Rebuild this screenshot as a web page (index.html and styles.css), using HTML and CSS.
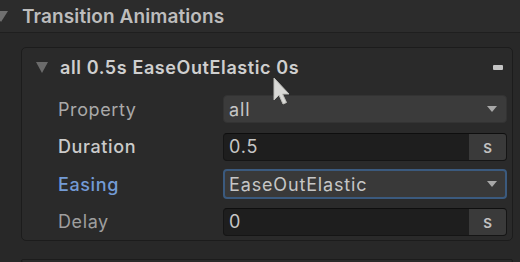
FILE: index.html
```html
<!DOCTYPE html>
<html lang="en">
<head>
    <meta charset="UTF-8">
    <meta name="viewport" content="width=device-width, initial-scale=1.0">
    <title>Transition Animations</title>
    <link rel="stylesheet" href="styles.css">
</head>
<body>
    <div class="section-header">
        <span class="foldout open"></span>
        <span class="section-title">Transition Animations</span>
    </div>

    <div class="section-body">
        <div class="card">
            <div class="card-header">
                <span class="foldout small open"></span>
                <span class="card-title">all 0.5s EaseOutElastic 0s</span>
                <span class="remove-btn"></span>
            </div>

            <div class="fields">
                <div class="field">
                    <div class="label">Property</div>
                    <div class="dropdown">
                        <span class="value">all</span>
                        <span class="arrow"></span>
                    </div>
                </div>
                <div class="field">
                    <div class="label modified">Duration</div>
                    <div class="text-input">
                        <span class="value">0.5</span>
                        <span class="unit">s</span>
                    </div>
                </div>
                <div class="field">
                    <div class="label focused">Easing</div>
                    <div class="dropdown focused">
                        <span class="value">EaseOutElastic</span>
                        <span class="arrow"></span>
                    </div>
                </div>
                <div class="field">
                    <div class="label dim">Delay</div>
                    <div class="text-input">
                        <span class="value">0</span>
                        <span class="unit">s</span>
                    </div>
                </div>
            </div>
        </div>

        <div class="card next"></div>
    </div>

    <!-- mouse pointer sitting over the card header -->
    <svg class="cursor" width="20" height="30" viewBox="0 0 20 30">
        <path d="M1 1 L1 23 L6 18 L10 27 L13.5 25.5 L9.5 17 L16 17 Z" fill="#d9d9d6" stroke="#bdbdb9" stroke-width="1" stroke-linejoin="round"/>
    </svg>
</body>
</html>
```

FILE: styles.css
```css
body {
    margin: 0;
    width: 520px;
    height: 262px;
    overflow: hidden;
    background: #282828;
    font-family: Inter, "Open Sans", sans-serif;
    color: #c4c4c4;
    position: relative;
}

.section-header {
    height: 32px;
    display: flex;
    align-items: center;
    background: #2c2c2c;
    border-bottom: 1px solid #1f1f1f;
}
.section-title {
    margin-left: 14px;
    font-size: 19px;
    font-weight: 600;
    color: #bdbdbd;
    letter-spacing: 0.1px;
}

.foldout {
    width: 0;
    height: 0;
    border-left: 7px solid transparent;
    border-right: 7px solid transparent;
    border-top: 11px solid #707070;
    margin-left: -6px;
}
.foldout.small {
    border-left-width: 6px;
    border-right-width: 6px;
    border-top-width: 11px;
    border-top-color: #6b6b6b;
    margin-left: 0;
}

.section-body {
    padding: 14px 7px 0 21px;
}

.card {
    background: #2a2a2a;
    border: 1px solid #1c1c1c;
    border-radius: 5px;
    padding: 0 5px 4px 0;
}
.card.next {
    margin-top: 18px;
    height: 2px;
    padding: 0;
}

.card-header {
    height: 38px;
    display: flex;
    align-items: center;
    padding-left: 14px;
}
.card-title {
    margin-left: 12px;
    font-size: 18px;
    font-weight: 600;
    color: #cfcfcf;
    letter-spacing: 0.6px;
    flex: 1;
}
.remove-btn {
    width: 10px;
    height: 5px;
    border-radius: 1px;
    background: #c4c4c4;
    margin-right: 4px;
}

.fields {
    padding-top: 9px;
    display: flex;
    flex-direction: column;
    gap: 9.5px;
}
.field {
    display: flex;
    align-items: center;
    height: 28px;
}
.label {
    width: 165px;
    padding-left: 36px;
    font-size: 18px;
    color: #a9a9a9;
    letter-spacing: 0.6px;
}
.label.modified {
    color: #cbcbcb;
    font-weight: 500;
}
.label.focused {
    color: #739bd6;
    font-weight: 500;
}
.label.dim {
    color: #9e9e9e;
}

.dropdown,
.text-input {
    flex: 1;
    height: 28px;
    box-sizing: border-box;
    display: flex;
    align-items: center;
    border-radius: 4px;
    font-size: 18px;
    color: #c6c6c6;
    letter-spacing: 0.85px;
}
.dropdown {
    background: #3b3b3b;
    border: 1px solid #333333;
    padding: 0 9px 0 5px;
}
.dropdown.focused {
    height: 30px;
    border: 2px solid #3b5a7e;
    padding-left: 4px;
    padding-right: 8px;
    background: #393939;
}
.dropdown .value {
    flex: 1;
}
.arrow {
    width: 0;
    height: 0;
    border-left: 5px solid transparent;
    border-right: 5px solid transparent;
    border-top: 6px solid #a8a8a8;
}

.text-input {
    background: #1e1e1e;
    border: 1px solid #151515;
    border-top-color: #0e0e0e;
    overflow: hidden;
    padding-left: 5px;
}
.text-input .value {
    flex: 1;
}
.unit {
    width: 37px;
    align-self: stretch;
    display: flex;
    align-items: center;
    justify-content: center;
    background: #3a3a3a;
    font-size: 17px;
    font-weight: 500;
    color: #c2c2c2;
    letter-spacing: 0;
}

.cursor {
    position: absolute;
    left: 273px;
    top: 77px;
}
```
